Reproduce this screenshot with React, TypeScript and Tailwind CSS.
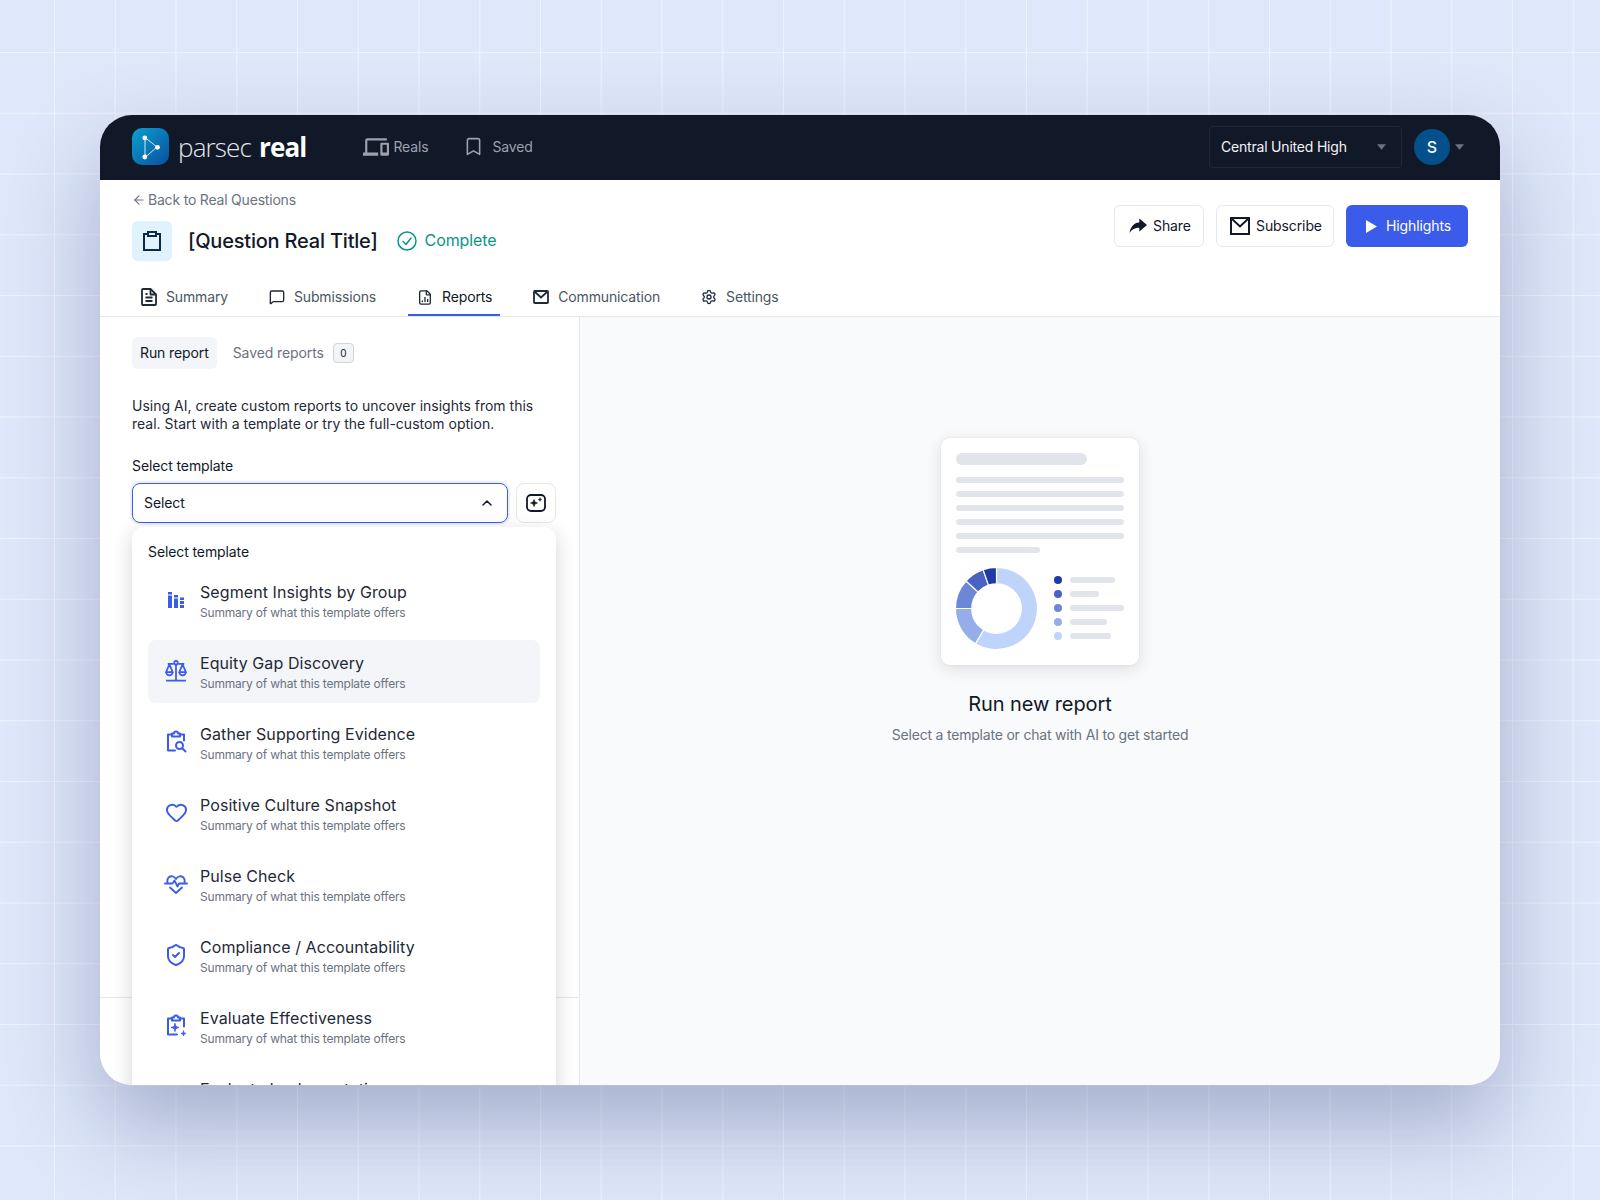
import React from "react";
import { ArrowLeft, Bookmark, ChevronUp, FileChartColumn, Heart, MessageSquare, Settings, ShieldCheck } from "lucide-react";
import { MdOutlineDevices } from "react-icons/md";

const font = "[font-family:Inter,'Liberation_Sans',sans-serif]";

function Caret({ className }: { className: string }) {
  return (
    <svg viewBox="0 0 10 6" className={className} fill="currentColor">
      <path d="M0 0h10L5 6z" />
    </svg>
  );
}

function LogoMark() {
  return (
    <div className="flex h-[37px] w-[37px] items-center justify-center rounded-[10px] bg-[linear-gradient(135deg,#0aa0cf,#0a4f9f)]">
      <svg viewBox="0 0 37 37" className="h-[37px] w-[37px]" fill="none">
        <path d="M13 9.500v20L25 19z" stroke="#cfeaf8" strokeWidth="1" />
        <circle cx="12.800" cy="10" r="2.400" fill="#fff" />
        <circle cx="12.800" cy="29" r="2.400" fill="#fff" />
        <circle cx="25.500" cy="19.300" r="2.400" fill="#fff" />
      </svg>
    </div>
  );
}

function ClipIcon() {
  return (
    <svg viewBox="0 0 20 22" className="h-[22px] w-5" fill="none" stroke="#0f2a47" strokeWidth="2">
      <path d="M6 4H2v16h16V4h-4" />
      <rect x="6" y="2" width="8" height="4" fill="none" />
    </svg>
  );
}

function ShareIcon() {
  return (
    <svg viewBox="0 0 20 20" className="h-5 w-5" fill="#111827">
      <path d="M11.300 2.600 19 9l-7.700 6.400v-3.700c-4.200 0-7.400 1.300-9.800 5.400C2.100 11.800 5.600 7.600 9 6.800l2.300-.4z" />
    </svg>
  );
}

function SquareMail() {
  return (
    <svg viewBox="0 0 20 18" className="h-[18px] w-5 shrink-0" fill="none" stroke="#111827" strokeWidth="2">
      <rect x="1" y="1" width="18" height="16" />
      <path d="m1.500 1.500 8.500 8 8.500-8" />
    </svg>
  );
}

function TabMail() {
  return (
    <svg viewBox="0 0 16 14" className="h-[14px] w-4" fill="none" stroke="#1f2937" strokeWidth="1.800">
      <rect x="1" y="1" width="14" height="12" rx="0.800" />
      <path d="m1.500 1.500 6.500 6 6.500-6" />
    </svg>
  );
}

function SummaryIcon() {
  return (
    <svg viewBox="0 0 16 18" className="h-[18px] w-4" fill="none" stroke="#1f2937" strokeWidth="1.800" strokeLinejoin="round">
      <path d="M1 2a1 1 0 0 1 1-1h7.500L15 6.500V16a1 1 0 0 1-1 1H2a1 1 0 0 1-1-1z" />
      <path d="M9.500 1v5.500H15M4.500 9.500h7M4.500 13h7M4.500 6h2" />
    </svg>
  );
}

function SparkBox() {
  return (
    <svg viewBox="0 0 20 18" className="h-[18px] w-5" fill="none" stroke="#111827">
      <rect x="1" y="1" width="18" height="16" rx="4" strokeWidth="1.800" />
      <path d="M8 5.500 9 8l2.500 1L9 10l-1 2.500L7 10 4.500 9 7 8z" fill="#111827" strokeWidth="0.600" />
      <path d="M14 3.600 14.500 5l1.400.500-1.400.500-.500 1.400L13.500 6l-1.400-.500 1.400-.500z" fill="#111827" strokeWidth="0.400" />
    </svg>
  );
}

const blue = "#3b5bea";

function BarsIcon() {
  return (
    <svg viewBox="0 0 16 16" className="h-4 w-4" fill={blue}>
      <rect x="0" y="0" width="4" height="2.500" />
      <rect x="0" y="3.500" width="4" height="12.500" />
      <rect x="6" y="3" width="4" height="2.500" />
      <rect x="6" y="6.500" width="4" height="9.500" />
      <rect x="12" y="5.500" width="4" height="2.500" />
      <rect x="12" y="9" width="4" height="3" />
      <rect x="12" y="13" width="4" height="3" />
    </svg>
  );
}

function ScaleIcon() {
  return (
    <svg viewBox="0 0 20 20" className="h-[22px] w-[22px]" fill="none" stroke={blue} strokeWidth="1.600" strokeLinejoin="round">
      <circle cx="10" cy="2.500" r="1.600" />
      <path d="M10 4.500V18M1 18.700h18M2.500 3.500h5.500M12 3.500h5.500" />
      <path d="M4 4 1 11h6zM16 4l-3 7h6z" />
      <path d="M1 11a3 3 0 0 0 6 0M13 11a3 3 0 0 0 6 0" />
    </svg>
  );
}

function ClipSearch() {
  return (
    <svg viewBox="0 0 24 24" className="h-6 w-6" fill="none" stroke={blue} strokeWidth="2" strokeLinecap="round" strokeLinejoin="round">
      <path d="M8 4.500H4v16h7" />
      <path d="M16 4.500h4v6" />
      <path d="M8 6.500V3.500h2a2 2 0 0 1 4 0h2v3z" />
      <circle cx="15.500" cy="15.500" r="3.500" />
      <path d="m18.500 18.500 3 3" />
    </svg>
  );
}

function PulseIcon() {
  return (
    <svg viewBox="0 0 24 24" className="h-6 w-6" fill="none" stroke={blue} strokeWidth="1.800" strokeLinecap="round" strokeLinejoin="round">
      <path d="M3.500 10.500C2.500 6 6 3.500 9 4.500c1.500.5 2.300 1.500 3 2.500.7-1 1.500-2 3-2.500 3-1 6.500 1.500 5.500 6" />
      <path d="M1 11.500h7.500l2-3 3 6 1.500-3h8" />
      <path d="M6 15.500 12 21l6-5.500" />
    </svg>
  );
}

function ClipSpark() {
  return (
    <svg viewBox="0 0 24 24" className="h-6 w-6" fill="none" stroke={blue} strokeWidth="2" strokeLinecap="round" strokeLinejoin="round">
      <path d="M8 4.500H4v16h9" />
      <path d="M16 4.500h4v8" />
      <path d="M8 6.500V3.500h2a2 2 0 0 1 4 0h2v3z" />
      <path d="m11 9.500 1 3 3 1-3 1-1 3-1-3-3-1 3-1z" fill={blue} strokeWidth="0.800" />
      <path d="m19.500 17 .6 1.900 1.900.6-1.900.6-.6 1.900-.6-1.900-1.900-.6 1.900-.6z" fill={blue} strokeWidth="0.800" />
    </svg>
  );
}

const items: { title: string; icon: React.ReactNode; active?: boolean }[] = [
  { title: "Segment Insights by Group", icon: <BarsIcon /> },
  { title: "Equity Gap Discovery", icon: <ScaleIcon />, active: true },
  { title: "Gather Supporting Evidence", icon: <ClipSearch /> },
  { title: "Positive Culture Snapshot", icon: <Heart size={23} color={blue} strokeWidth={2} /> },
  { title: "Pulse Check", icon: <PulseIcon /> },
  { title: "Compliance / Accountability", icon: <ShieldCheck size={24} color={blue} strokeWidth={2} /> },
  { title: "Evaluate Effectiveness", icon: <ClipSpark /> },
  { title: "Evaluate Implementation", icon: <ClipSearch /> },
];

const tabs: { label: string; icon: React.ReactNode; active?: boolean }[] = [
  { label: "Summary", icon: <SummaryIcon /> },
  { label: "Submissions", icon: <MessageSquare size={18} color="#1f2937" strokeWidth={2} /> },
  { label: "Reports", icon: <FileChartColumn size={19} color="#1f2937" strokeWidth={2} />, active: true },
  { label: "Communication", icon: <TabMail /> },
  { label: "Settings", icon: <Settings size={18} color="#1f2937" strokeWidth={2} /> },
];

function arc(a0: number, a1: number, r0: number, r1: number) {
  const c = 40.5;
  const pt = (a: number, r: number) => {
    const t = ((a - 90) * Math.PI) / 180;
    return `${(c + r * Math.cos(t)).toFixed(2)} ${(c + r * Math.sin(t)).toFixed(2)}`;
  };
  const large = a1 - a0 > 180 ? 1 : 0;
  return `M${pt(a0, r1)}A${r1} ${r1} 0 ${large} 1 ${pt(a1, r1)}L${pt(a1, r0)}A${r0} ${r0} 0 ${large} 0 ${pt(a0, r0)}Z`;
}

const segments = [
  { a: 0, b: 211, c: "#bfd4fb" },
  { a: 211, b: 270, c: "#95aeea" },
  { a: 270, b: 312, c: "#6d87d8" },
  { a: 312, b: 341, c: "#4a62c4" },
  { a: 341, b: 360, c: "#1f3aa8" },
];

const legend = [
  { c: "bg-[#1f3aa8]", w: "w-[45px]" },
  { c: "bg-[#4a62c4]", w: "w-[29px]" },
  { c: "bg-[#6d87d8]", w: "w-[54px]" },
  { c: "bg-[#95aeea]", w: "w-[37px]" },
  { c: "bg-[#bfd4fb]", w: "w-[41px]" },
];

function Illustration() {
  return (
    <div className="flex h-[227px] w-[198px] flex-col rounded-lg bg-white px-[15px] pt-[15px] shadow-[0_4px_16px_rgba(17,24,39,0.12),0_0_1px_rgba(17,24,39,0.25)]">
      <div className="h-3 w-[131px] rounded-full bg-[#e1e4ea]" />
      <div className="mt-[12px] flex flex-col gap-2">
        {[0, 1, 2, 3, 4].map((i) => (
          <div key={i} className="h-1.5 w-[168px] rounded-full bg-[#e1e4ea]" />
        ))}
        <div className="h-1.5 w-[84px] rounded-full bg-[#e1e4ea]" />
      </div>
      <div className="mt-[15px] flex items-start">
        <svg viewBox="0 0 81 81" className="h-[81px] w-[81px] overflow-visible">
          {segments.map((s) => (
            <path key={s.a} d={arc(s.a, s.b, 24.7, 41.1)} fill={s.c} stroke="#fff" strokeWidth="1.200" />
          ))}
        </svg>
        <div className="ml-[17px] mt-[8px] flex flex-col gap-1.5">
          {legend.map((l) => (
            <div key={l.c} className="flex h-2 items-center gap-2">
              <span className={`h-2 w-2 rounded-full ${l.c}`} />
              <span className={`h-1.5 rounded-full bg-[#e1e4ea] ${l.w}`} />
            </div>
          ))}
        </div>
      </div>
    </div>
  );
}

export default function App() {
  return (
    <div
      className={`${font} min-h-[1200px] overflow-hidden bg-[#dfe8fa] bg-[linear-gradient(to_right,#eef3fd_1px,transparent_1px),linear-gradient(to_bottom,#eef3fd_1px,transparent_1px)] bg-[size:60.75px_60.75px] bg-[position:54px_52px] px-[100px] pt-[115px]`}
    >
      <div className="flex h-[970px] w-[1400px] flex-col overflow-hidden rounded-[32px] bg-white shadow-[0_40px_90px_rgba(30,40,95,0.3)]">
        <header className="flex h-[65px] shrink-0 items-center justify-between bg-[#111827] pb-[2px] pl-8 pr-[36px]">
          <div className="flex items-center">
            <LogoMark />
            <div className="ml-[9px] flex items-baseline text-[26px] leading-none tracking-[-0.85px] text-[#e5e7eb] [font-family:'Open_Sans',sans-serif]">
              <span className="font-light">parsec</span>
              <span className="ml-[8px] font-bold text-white">real</span>
            </div>
            <nav className="ml-[57px] flex items-center gap-[35px] text-sm tracking-[-0.15px] text-[#9ca3af]">
              <div className="flex items-center gap-[4px]">
                <MdOutlineDevices size={26} className="text-[#9ca3af]" />
                <span>Reals</span>
              </div>
              <div className="flex items-center gap-[8px]">
                <Bookmark size={21} strokeWidth={1.8} />
                <span>Saved</span>
              </div>
            </nav>
          </div>
          <div className="flex items-center">
            <div className="flex h-[42px] w-[193px] items-center justify-between rounded-[4px] border border-[#1c2a3a] pl-[11px] pr-[15px] text-sm tracking-[-0.2px] text-[#f3f4f6]">
              <span>Central United High</span>
              <Caret className="h-[6px] w-[9px] text-[#6b7280]" />
            </div>
            <div className="ml-3 flex h-9 w-9 items-center justify-center rounded-full bg-[#03508c] text-base font-medium text-white">S</div>
            <Caret className="ml-[5px] h-[6px] w-[9px] text-[#6b7280]" />
          </div>
        </header>

        <section className="shrink-0 bg-white px-8 pt-[11px]">
          <div className="flex items-start justify-between">
            <div>
              <div className="flex items-center gap-[2px] text-sm leading-[18px] tracking-[-0.2px] text-[#6b7280]">
                <ArrowLeft size={14} />
                <span>Back to Real Questions</span>
              </div>
              <div className="mt-3 flex items-center">
                <div className="flex h-10 w-10 items-center justify-center rounded-md bg-[#e0f2fe]">
                  <ClipIcon />
                </div>
                <h1 className="ml-4 text-xl font-medium tracking-[-0.2px] text-[#111827]">[Question Real Title]</h1>
                <svg viewBox="0 0 20 20" className="ml-[19px] h-5 w-5" fill="none" stroke="#0d9488" strokeWidth="1.500" strokeLinecap="round" strokeLinejoin="round">
                  <circle cx="10" cy="10" r="9" />
                  <path d="m6 10.500 3 3 5-6.500" />
                </svg>
                <span className="ml-[8px] -mt-[2px] text-base tracking-[-0.1px] text-[#0d9488]">Complete</span>
              </div>
            </div>
            <div className="mt-[14px] flex gap-3 text-sm tracking-[-0.1px] text-[#111827]">
              <button className="flex h-[42px] w-[90px] items-center gap-[5px] rounded-md border border-[#e5e7eb] bg-white pl-[13px]">
                <ShareIcon />
                Share
              </button>
              <button className="flex h-[42px] w-[118px] items-center gap-[6px] rounded-md border border-[#e5e7eb] bg-white pl-[13px]">
                <SquareMail />
                Subscribe
              </button>
              <button className="flex h-[42px] w-[122px] items-center gap-[9px] rounded-md bg-[#3b5bea] pl-5 text-white">
                <svg viewBox="0 0 11 13" className="h-[13px] w-[11px]" fill="#fff">
                  <path d="M0 0v13l11-6.500z" />
                </svg>
                Highlights
              </button>
            </div>
          </div>
          <nav className="mt-[17px] flex gap-6 text-sm tracking-[-0.15px] text-[#4b5563]">
            {tabs.map((t) => (
              <div
                key={t.label}
                className={`flex h-[38px] items-center gap-[9px] border-b-2 pl-[9px] pr-2 pt-[2px] ${t.active ? "border-[#3b5bea] text-[#111827]" : "border-transparent"}`}
              >
                <span className="flex w-4 justify-center">{t.icon}</span>
                <span>{t.label}</span>
              </div>
            ))}
          </nav>
        </section>

        <main className="flex min-h-0 flex-1 border-t border-[#e5e7eb]">
          <aside className="relative flex w-[480px] shrink-0 flex-col border-r border-[#e5e7eb] bg-white">
            <div className="flex-1 pl-8 pr-6 pt-5">
              <div className="flex items-center text-sm tracking-[-0.1px]">
                <span className="flex h-8 items-center rounded-md bg-[#f3f5f8] px-2 text-[#111827]">Run report</span>
                <span className="ml-4 text-[#6b7280]">Saved reports</span>
                <span className="ml-[9px] flex h-[20px] w-[21px] items-center justify-center rounded border border-[#d1d5db] bg-[#f3f4f6] text-[10px] text-[#111827]">0</span>
              </div>
              <p className="mt-[28px] pr-2 text-sm leading-[18px] text-[#1f2937]">
                Using AI, create custom reports to uncover insights from this real. Start with a template or try the full-custom option.
              </p>
              <div className="mt-[24px] text-sm leading-[18px] tracking-[-0.1px] text-[#111827]">Select template</div>
              <div className="mt-[8px] flex gap-2">
                <div className="flex h-10 w-[376px] shrink-0 items-center justify-between rounded-lg border-[1.5px] border-[#3b5bea] pl-[11px] pr-3 text-sm tracking-[-0.1px] text-[#111827] shadow-[0_0_0_2px_rgba(59,91,234,0.1)]">
                  <span>Select</span>
                  <ChevronUp size={16} strokeWidth={2.2} />
                </div>
                <div className="flex h-10 w-10 shrink-0 items-center justify-center rounded-lg border border-[#e5e7eb]">
                  <SparkBox />
                </div>
              </div>
            </div>
            <div className="h-[88px] shrink-0 border-t border-[#e5e7eb]" />
            <div className="absolute left-8 top-[210px] w-[424px] rounded-xl bg-white p-4 shadow-[0_6px_20px_rgba(17,24,39,0.18)]">
              <div className="mb-2 text-sm leading-[18px] tracking-[-0.1px] text-[#111827]">Select template</div>
              <ul className="flex flex-col gap-2">
                {items.map((it) => (
                  <li
                    key={it.title}
                    className={`flex h-[63px] items-center gap-3 rounded-lg px-4 ${it.active ? "bg-[#f3f5f9]" : ""}`}
                  >
                    <span className="-mt-[2px] flex h-6 w-6 shrink-0 items-center justify-center">{it.icon}</span>
                    <div>
                      <div className="text-base leading-6 tracking-[0.08px] text-[#1f2937]">{it.title}</div>
                      <div className="mt-px text-xs leading-4 tracking-[-0.2px] text-[#6b7280]">Summary of what this template offers</div>
                    </div>
                  </li>
                ))}
              </ul>
            </div>
          </aside>
          <div className="flex flex-1 flex-col items-center bg-[#f9fafb] pt-[121px]">
            <Illustration />
            <h2 className="mt-[25px] text-xl leading-7 tracking-[-0.1px] text-[#111827]">Run new report</h2>
            <p className="mt-[7px] text-sm leading-5 tracking-[-0.2px] text-[#6b7280]">Select a template or chat with AI to get started</p>
          </div>
        </main>
      </div>
    </div>
  );
}
